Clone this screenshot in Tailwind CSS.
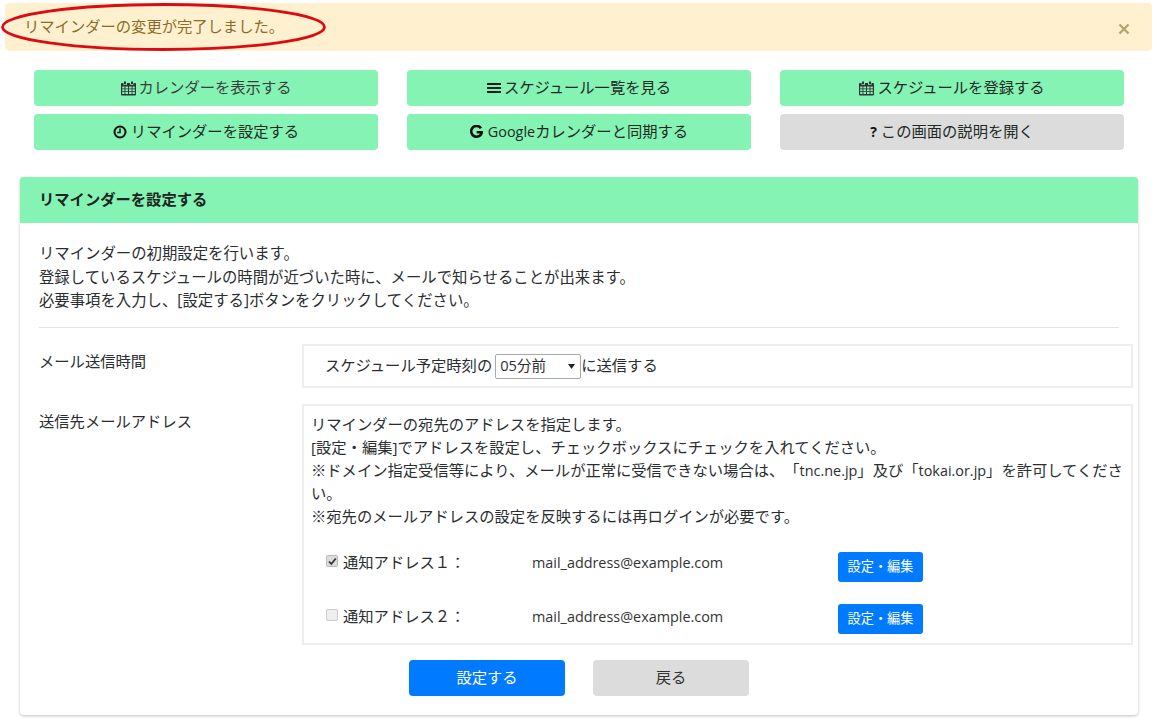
<!DOCTYPE html>
<html lang="ja">
<head>
<meta charset="utf-8">
<script src="https://cdn.jsdelivr.net/npm/@tailwindcss/browser@4"></script>
<title>リマインダー</title>
</head>
<body class="bg-white text-[#2a2e31] text-[15.3px] leading-[23.5px] [text-spacing-trim:space-all] font-['Open_Sans','Noto_Sans_CJK_JP',sans-serif]">
<div class="relative w-[1157px] h-[720px] overflow-hidden pt-[3px]">
  <div class="mx-[5px] h-[48px] bg-[#fff1cf] rounded flex items-center justify-between pl-[19px] pr-[22px] text-[#8a6d2a]">
    <span>リマインダーの変更が完了しました。</span>
    <svg class="w-[12px] h-[12px] mt-[4px] text-[#b5a76c]" viewBox="0 0 12 12"><path d="M1.500 1.500l9 9M10.500 1.500l-9 9" stroke="currentColor" stroke-width="2.400" fill="none"/></svg>
  </div>

  <svg class="absolute left-0 top-0 w-[340px] h-[56px]" viewBox="0 0 340 56" fill="none"><ellipse cx="163.500" cy="27" rx="161" ry="22.500" stroke="#dd0a12" stroke-width="2.800"/></svg>

  <div class="mt-[19px] ml-[34px] w-[1090px] grid grid-cols-3 gap-x-[29px] gap-y-[8px]">
    <div class="h-[36px] rounded bg-[#84f3b4] flex items-center justify-center gap-[3px] text-[#3a3f3c]">
      <svg class="w-[15px] h-[15px]" viewBox="0 0 15 15" fill="#333"><path d="M3 0.500h2v2.500h-2zM10 0.500h2v2.500h-2z"/><path fill-rule="evenodd" d="M1 2h1.500v1.800h3.500v-1.800h3v1.800h3.500v-1.800h1.500a1 1 0 0 1 1 1v10.500a1 1 0 0 1-1 1h-13a1 1 0 0 1-1-1v-10.500a1 1 0 0 1 1-1zM1.200 5.500v2h2.300v-2zM4.400 5.500v2h2.600v-2zM8 5.500v2h2.600v-2zM11.500 5.500v2h2.300v-2zM1.200 8.300v2h2.300v-2zM4.400 8.300v2h2.600v-2zM8 8.300v2h2.600v-2zM11.500 8.300v2h2.300v-2zM1.200 11.100v2h2.300v-2zM4.400 11.100v2h2.600v-2zM8 11.100v2h2.600v-2zM11.500 11.100v2h2.300v-2z"/></svg>
      <span>カレンダーを表示する</span>
    </div>
    <div class="h-[36px] rounded bg-[#84f3b4] flex items-center justify-center gap-[3px] text-[#1f2a25]">
      <svg class="w-[14px] h-[12px]" viewBox="0 0 14 12" fill="#1a1f1c"><path d="M0 1h14v2h-14zM0 5h14v2h-14zM0 9h14v2h-14z"/></svg>
      <span>スケジュール一覧を見る</span>
    </div>
    <div class="h-[36px] rounded bg-[#84f3b4] flex items-center justify-center gap-[3px] text-[#1f2a25]">
      <svg class="w-[15px] h-[15px]" viewBox="0 0 15 15" fill="#333"><path d="M3 0.500h2v2.500h-2zM10 0.500h2v2.500h-2z"/><path fill-rule="evenodd" d="M1 2h1.500v1.800h3.500v-1.800h3v1.800h3.500v-1.800h1.500a1 1 0 0 1 1 1v10.500a1 1 0 0 1-1 1h-13a1 1 0 0 1-1-1v-10.500a1 1 0 0 1 1-1zM1.200 5.500v2h2.300v-2zM4.400 5.500v2h2.600v-2zM8 5.500v2h2.600v-2zM11.500 5.500v2h2.300v-2zM1.200 8.300v2h2.300v-2zM4.400 8.300v2h2.600v-2zM8 8.300v2h2.600v-2zM11.500 8.300v2h2.300v-2zM1.200 11.100v2h2.300v-2zM4.400 11.100v2h2.600v-2zM8 11.100v2h2.600v-2zM11.500 11.100v2h2.300v-2z"/></svg>
      <span>スケジュールを登録する</span>
    </div>
    <div class="h-[36px] rounded bg-[#84f3b4] flex items-center justify-center gap-[4px] text-[#1f2a25]">
      <svg class="w-[14px] h-[14px]" viewBox="0 0 14 14" fill="none" stroke="#111"><circle cx="7" cy="7" r="5.500" stroke-width="2"/><path d="M7 3.500v4h-2.800" stroke-width="1.500"/></svg>
      <span>リマインダーを設定する</span>
    </div>
    <div class="h-[36px] rounded bg-[#84f3b4] flex items-center justify-center gap-[5px] text-[#1f2a25]">
      <svg class="w-[13px] h-[14px]" viewBox="0 0 13 14" fill="none" stroke="#111" stroke-width="2.600"><path d="M11 3.200a5.400 5.400 0 1 0 .9 4.100h-5.200"/></svg>
      <span><span class="text-[14.4px]">Google</span>カレンダーと同期する</span>
    </div>
    <div class="h-[36px] rounded bg-[#dcdcdc] flex items-center justify-center gap-[4px] text-[#1f2a25]">
      <span class="font-bold text-[14px] leading-none text-[#111]">?</span>
      <span>この画面の説明を開く</span>
    </div>
  </div>

  <div class="mt-[27px] ml-[20px] w-[1118px] h-[538px] rounded bg-white shadow-[0_1px_3px_rgba(0,0,0,0.25)]">
    <div class="h-[46px] rounded-t bg-[#84f3b4] flex items-center px-[19px] font-bold text-[#1d2521]">リマインダーを設定する</div>
    <div class="px-[19px] pt-[19px]">
      <p class="text-[15.38px]">リマインダーの初期設定を行います。<br>登録しているスケジュールの時間が近づいた時に、メールで知らせることが出来ます。<br>必要事項を入力し、[設定する]ボタンをクリックしてください。</p>
      <hr class="mt-[14.5px] border-t border-[#e4e4e4]">
      <div class="mt-[16px] flex">
        <div class="w-[263px] shrink-0 pt-[6px]">メール送信時間</div>
        <div class="w-[831px] shrink-0 h-[44px] border-2 border-[#eeeeee] flex items-center pl-[21px]">
          <span>スケジュール予定時刻の</span>
          <span class="ml-[3px] w-[86px] h-[25px] border border-[#a9a9a9] rounded-[2px] flex items-center justify-between pl-[4px] pr-[5px] text-[14.6px] bg-white"><span>05分前</span><svg class="w-[7px] h-[5px]" viewBox="0 0 7 5" fill="#222"><path d="M0 0h7l-3.500 5z"/></svg></span>
          <span>に送信する</span>
        </div>
      </div>
      <div class="mt-[16px] flex">
        <div class="w-[263px] shrink-0 pt-[6px]">送信先メールアドレス</div>
        <div class="w-[831px] shrink-0 h-[241px] border-2 border-[#eeeeee] pl-[7px] pr-[5px] pt-[7px]">
          <p class="leading-[23px]">リマインダーの宛先のアドレスを指定します。<br>[設定・編集]でアドレスを設定し、チェックボックスにチェックを入れてください。<br>※ドメイン指定受信等により、メールが正常に受信できない場合は、「<span class="text-[14.4px]">tnc.ne.jp</span>」及び「<span class="text-[14.4px]">tokai.or.jp</span>」を許可してください。<br>※宛先のメールアドレスの設定を反映するには再ログインが必要です。</p>
          <div class="mt-[23px] flex items-start h-[30px] pl-[15px]">
            <span class="mt-[4px] w-[12px] h-[12px] rounded-[2px] border border-[#bbb] bg-[#ddd] flex items-center justify-center">
              <svg class="w-[9px] h-[9px]" viewBox="0 0 9 9" fill="none" stroke="#333" stroke-width="1.800"><path d="M1 4.500l2.300 2.500 4.500-5.500"/></svg>
            </span>
            <span class="ml-[5px] w-[189px]">通知アドレス１：</span>
            <span class="w-[306px] text-[#333] text-[14.4px]">mail_address@example.com</span>
            <span class="mt-[1px] w-[85px] h-[30px] rounded-[3px] bg-[#007bff] text-white text-[13.2px] flex items-center justify-center">設定・編集</span>
          </div>
          <div class="mt-[24px] flex items-start h-[30px] pl-[15px]">
            <span class="mt-[4px] w-[12px] h-[12px] rounded-[2px] border border-[#ccc] bg-[#eee]"></span>
            <span class="ml-[5px] w-[189px]">通知アドレス２：</span>
            <span class="w-[306px] text-[#333] text-[14.4px]">mail_address@example.com</span>
            <span class="mt-[-1px] w-[85px] h-[30px] rounded-[3px] bg-[#007bff] text-white text-[13.2px] flex items-center justify-center">設定・編集</span>
          </div>
        </div>
      </div>
      <div class="mt-[15px] flex pl-[370px] gap-[28px]">
        <span class="w-[156px] h-[36px] rounded bg-[#007bff] text-white flex items-center justify-center">設定する</span>
        <span class="w-[156px] h-[36px] rounded bg-[#dcdcdc] text-[#333] flex items-center justify-center">戻る</span>
      </div>
    </div>
  </div>
</div>
</body>
</html>
